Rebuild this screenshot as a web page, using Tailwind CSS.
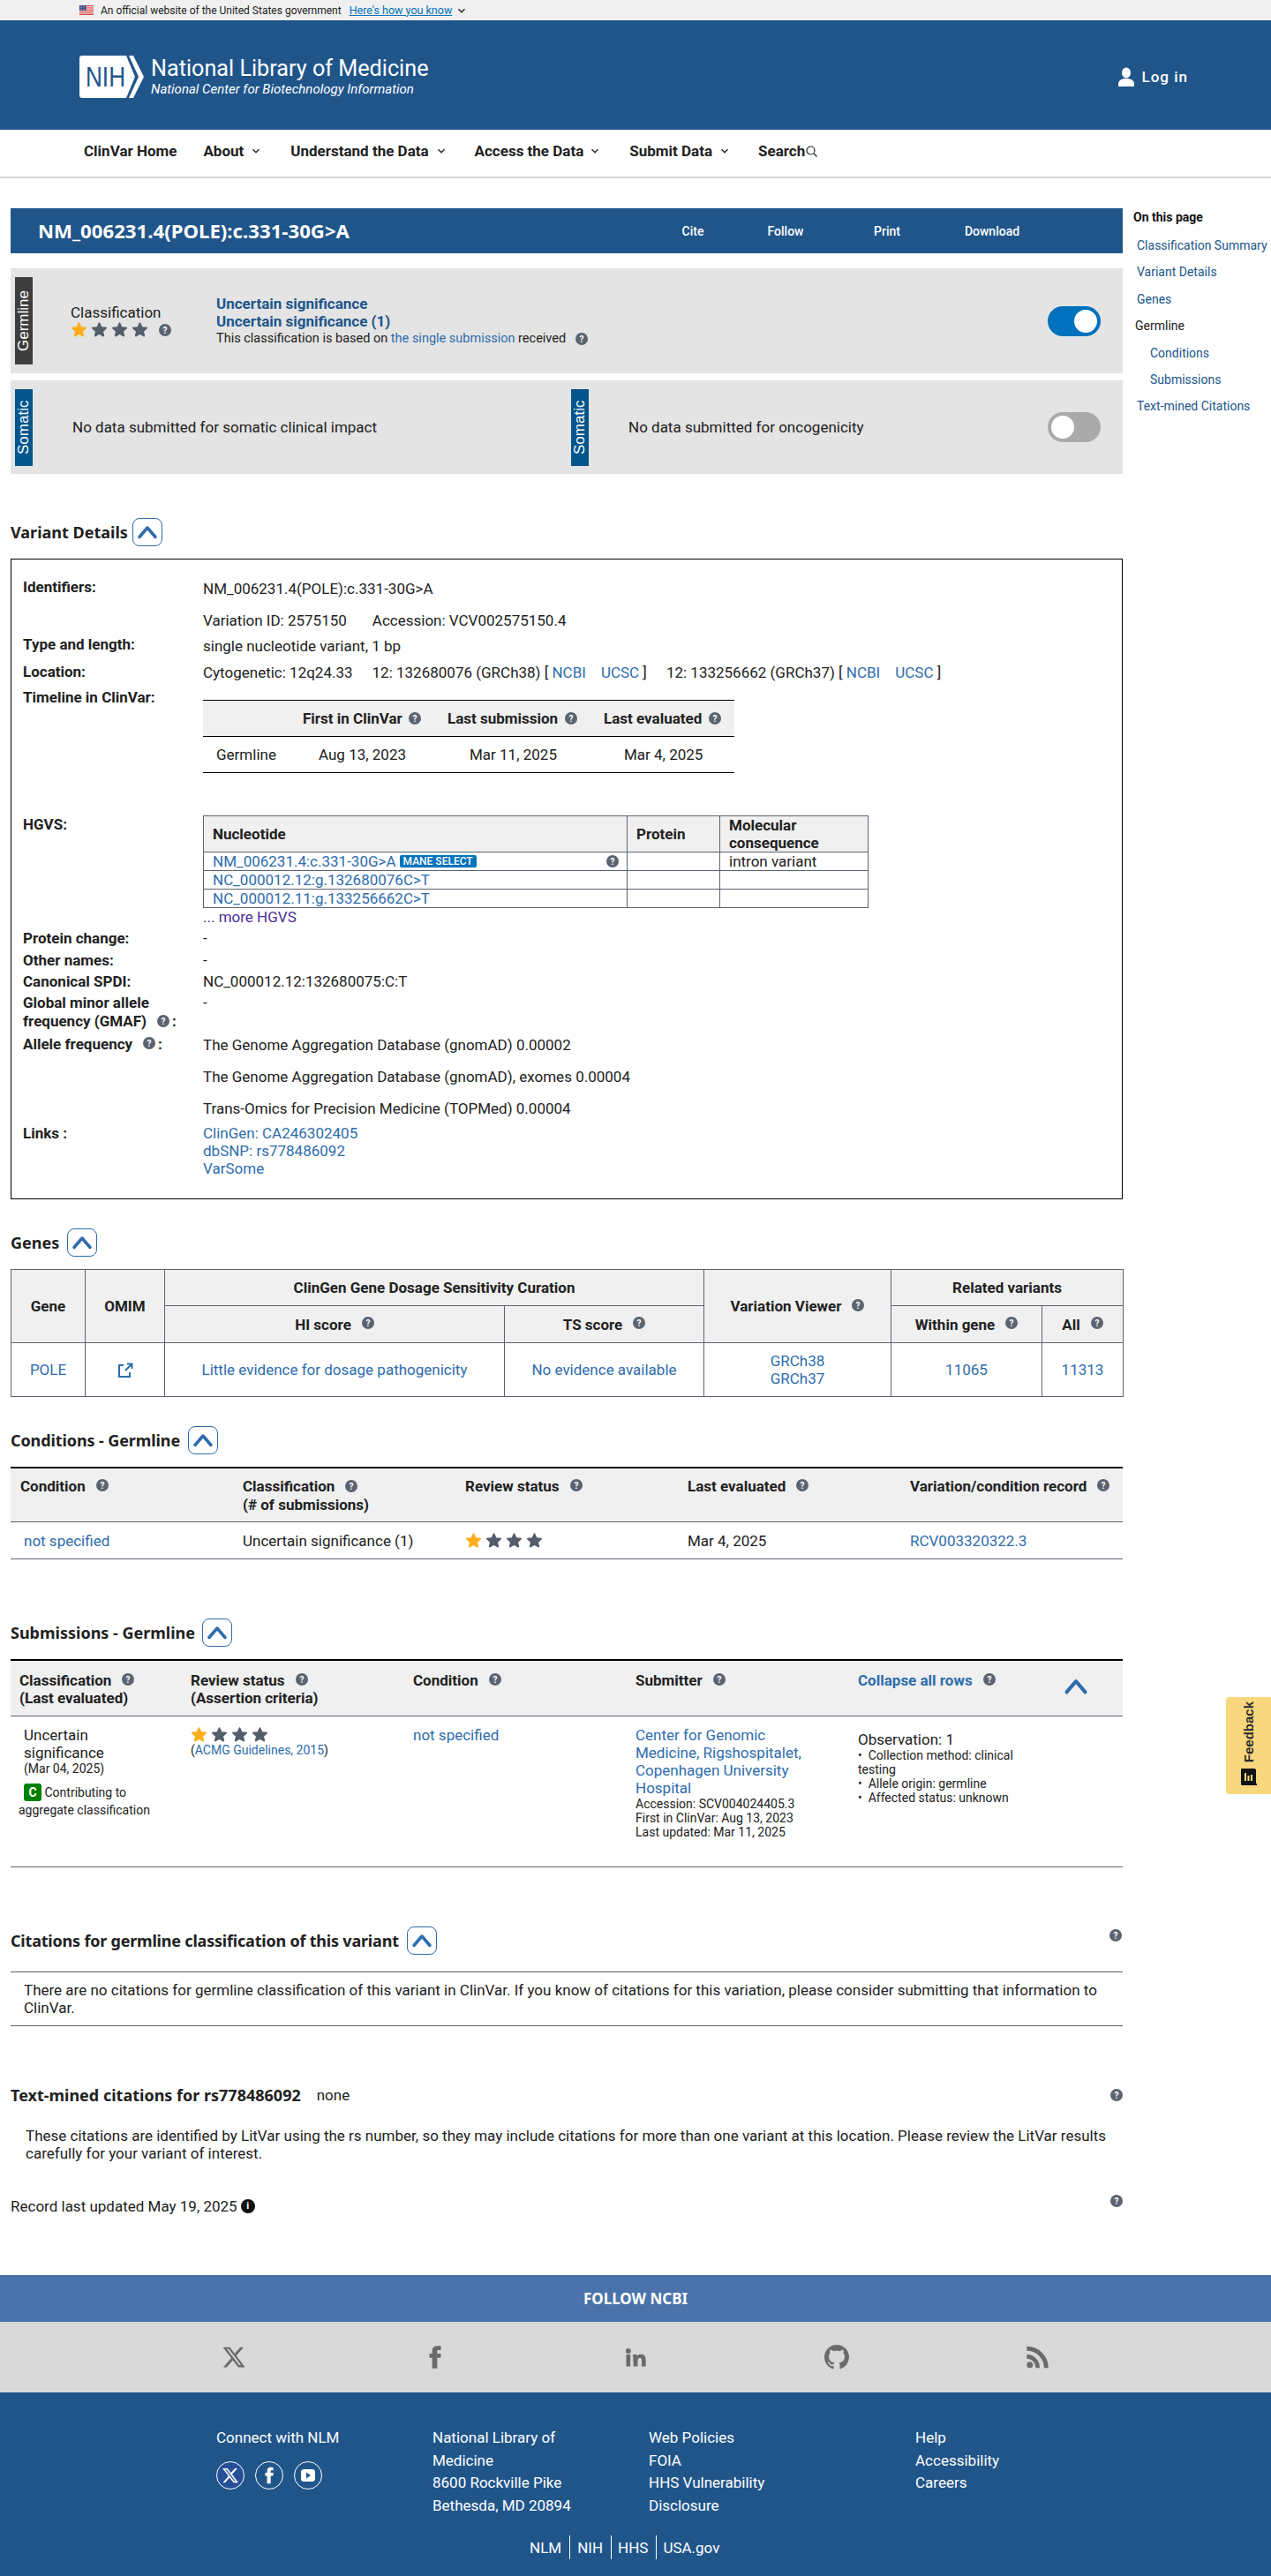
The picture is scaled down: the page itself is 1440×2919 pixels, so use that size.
<!DOCTYPE html>
<html lang="en">
<head>
    <meta charset="UTF-8">
    <meta name="viewport" content="width=device-width, initial-scale=1.0">
    <title>NM_006231.4(POLE):c.331-30G>A - ClinVar</title>
    <script src="https://cdn.jsdelivr.net/npm/@tailwindcss/browser@4"></script>
</head>
<body class="relative bg-white text-[#212121] text-[17px] leading-[20px] [font-family:Roboto,sans-serif] h-[2919px] overflow-hidden">
    <svg class="hidden">
        <symbol id="help" viewBox="0 0 14 14"><circle cx="7" cy="7" r="7" fill="#5c6370"/><text x="7" y="10.5" text-anchor="middle" font-size="10" font-weight="700" font-family="Roboto" fill="#fff">?</text></symbol>
        <symbol id="star" viewBox="0 0 24 24"><path d="M12 2.500l2.900 6.300 6.900.8-5.100 4.700 1.400 6.800-6.100-3.400-6.100 3.400 1.400-6.800-5.100-4.700 6.900-.8z" stroke-width="2" stroke-linejoin="round" stroke="currentColor" fill="currentColor"/></symbol>
        <symbol id="chev" viewBox="0 0 24 24"><path d="M3 17.500 12 7l9 10.500" fill="none" stroke="#2e6cad" stroke-width="3.500" stroke-linecap="round" stroke-linejoin="round"/></symbol>
        <symbol id="down" viewBox="0 0 10 10"><path d="M1.500 3.200 5 6.800l3.500-3.600" fill="none" stroke="currentColor" stroke-width="1.300"/></symbol>
        <symbol id="xlogo" viewBox="0 0 24 24"><path fill="currentColor" d="M18.244 2.250h3.308l-7.227 8.260 8.502 11.240H16.170l-5.214-6.817L4.990 21.750H1.680l7.730-8.835L1.254 2.250H8.080l4.713 6.231zm-1.161 17.520h1.833L7.084 4.126H5.117z"/></symbol>
    </svg>

    <!-- gov banner -->
    <div class="h-[23px] bg-[#f0f0f0] flex items-center pl-[90px] text-[12px]">
        <svg class="w-[16px] h-[11px] mr-[8px]" viewBox="0 0 16 11">
            <rect width="16" height="11" fill="#fff"/>
            <path d="M0 .5h16M0 2.200h16M0 3.900h16M0 5.600h16M0 7.300h16M0 9h16M0 10.500h16" stroke="#d9352c" stroke-width=".9"/>
            <rect width="7.500" height="5.800" fill="#2f3f7f"/>
            <path d="M1 1h5.500M1 2.800h5.500M1 4.600h5.500" stroke="#fff" stroke-width=".7" stroke-dasharray=".7 .7"/>
        </svg>
        <span>An official website of the United States government</span>
        <a class="ml-[9px] text-[12.500px] text-[#0071bc] underline">Here's how you know</a>
        <svg class="w-[10px] h-[10px] ml-[6px]"><use href="#down"/></svg>
    </div>

    <!-- NLM header -->
    <header class="h-[124px] bg-[#20558a] flex items-center pl-[90px] pr-[94px] text-white">
        <svg class="w-[73px] h-[48px] mt-[4px]" viewBox="0 0 73 48">
            <path d="M3 0h50l10 24-10 24H3q-3 0-3-3V3q0-3 3-3z" fill="#fff"/>
            <path d="M56 0h5l12 24-12 24h-5l11-24z" fill="#fff"/>
            <text x="7" y="35" font-family="Liberation Sans" font-size="31" fill="#20558a" textLength="45" lengthAdjust="spacingAndGlyphs">NIH</text>
        </svg>
        <div class="ml-[8px] mt-[4px]">
            <div class="text-[25.200px] leading-[28px]">National Library of Medicine</div>
            <div class="text-[15px] leading-[18px] italic">National Center for Biotechnology Information</div>
        </div>
        <div class="ml-auto flex items-center mt-[4px] font-medium tracking-[1px]">
            <svg class="w-[18px] h-[22px] mr-[9px]" viewBox="0 0 18 22" fill="#fff"><ellipse cx="9" cy="6.500" rx="5" ry="6"/><path d="M0 22v-3c0-4 4-6 9-6s9 2 9 6v3z"/></svg>
            Log in
        </div>
    </header>

    <!-- nav -->
    <nav class="h-[55px] border-b-2 border-[#d8d8d8] flex items-center font-bold text-[#212121] pl-[95px] pb-[5px]">
        <a>ClinVar Home</a>
        <a class="ml-[30px] flex items-center">About<svg class="w-[10px] h-[10px] ml-[9px]"><use href="#down"/></svg></a>
        <a class="ml-[34px] flex items-center">Understand the Data<svg class="w-[10px] h-[10px] ml-[9px]"><use href="#down"/></svg></a>
        <a class="ml-[33px] flex items-center">Access the Data<svg class="w-[10px] h-[10px] ml-[8px]"><use href="#down"/></svg></a>
        <a class="ml-[34px] flex items-center">Submit Data<svg class="w-[10px] h-[10px] ml-[9px]"><use href="#down"/></svg></a>
        <a class="ml-[33px] flex items-center">Search<svg class="w-[13px] h-[13px] ml-[1px]" viewBox="0 0 13 13" fill="none" stroke="#212121" stroke-width="1.200"><circle cx="5.500" cy="5.500" r="4.500"/><path d="m9 9 3.500 3.500"/></svg></a>
    </nav>

    <div class="flex pl-[12px] pt-[34px]">
        <main class="w-[1260px] shrink-0">
            <!-- title bar -->
            <div class="h-[51px] bg-[#20558a] text-white flex items-center relative">
                <h1 class="ml-[31px] text-[22.200px] font-bold [font-family:'Noto_Sans',sans-serif]">NM_006231.4(POLE):c.331-30G&gt;A</h1>
                <div class="ml-auto mr-[92px] h-full flex items-center text-[14px] font-medium">
                    <a class="w-[106px] text-center">Cite</a>
                    <a class="w-[104px] text-center">Follow</a>
                    <a class="w-[126px] text-center">Print</a>
                    <a class="w-[112px] text-center">Download</a>
                </div>
            </div>

            <!-- germline summary -->
            <section class="mt-[17px] h-[119px] bg-[#e4e4e4] flex items-center pl-[5px] pr-[25px]">
                <div class="w-[20px] h-[99px] bg-[#3d3d3d] text-white flex items-center justify-center [writing-mode:vertical-rl] rotate-180 [font-family:'Liberation_Sans',sans-serif]">Germline</div>
                <div class="ml-[43px] w-[165px]">
                    <div>Classification</div>
                    <div class="flex items-center gap-[4px] text-[#545d6b]">
                        <svg class="w-[19px] h-[19px] text-[#ffae1a]"><use href="#star"/></svg>
                        <svg class="w-[19px] h-[19px]"><use href="#star"/></svg>
                        <svg class="w-[19px] h-[19px]"><use href="#star"/></svg>
                        <svg class="w-[19px] h-[19px]"><use href="#star"/></svg>
                        <svg class="w-[14px] h-[14px] ml-[8px]"><use href="#help"/></svg>
                    </div>
                </div>
                <div>
                    <div class="font-bold text-[#20558a]">Uncertain significance</div>
                    <div class="font-bold text-[#20558a]">Uncertain significance (1)</div>
                    <div class="text-[14.500px] flex items-center">This classification is based on&nbsp;<a class="text-[#2e6cad]">the single submission</a>&nbsp;received<svg class="w-[14px] h-[14px] ml-[11px]"><use href="#help"/></svg></div>
                </div>
                <div class="ml-auto w-[60px] h-[34px] rounded-full bg-[#0071bc] flex items-center justify-end pr-[4px]"><span class="w-[26px] h-[26px] rounded-full bg-white"></span></div>
            </section>

            <!-- somatic summary -->
            <section class="mt-[8px] h-[106px] bg-[#e4e4e4] flex items-center pl-[5px] pr-[25px]">
                <div class="w-[20px] h-[87px] bg-[#00558c] text-white flex items-center justify-center [writing-mode:vertical-rl] rotate-180 [font-family:'Liberation_Sans',sans-serif]">Somatic</div>
                <div class="ml-[45px] w-[565px]">No data submitted for somatic clinical impact</div>
                <div class="w-[20px] h-[87px] bg-[#00558c] text-white flex items-center justify-center [writing-mode:vertical-rl] rotate-180 [font-family:'Liberation_Sans',sans-serif]">Somatic</div>
                <div class="ml-[45px]">No data submitted for oncogenicity</div>
                <div class="ml-auto w-[60px] h-[34px] rounded-full bg-[#aaaaaa] flex items-center pl-[4px]"><span class="w-[26px] h-[26px] rounded-full bg-white"></span></div>
            </section>

            <!-- variant details -->
            <div class="mt-[50px] h-[32px] flex items-center">
                <h2 class="text-[18px] font-bold [font-family:'Noto_Sans',sans-serif]">Variant Details</h2>
                <button class="ml-[5px] w-[34px] h-[32px] border border-[#2e6cad] rounded-[8px] flex items-center justify-center"><svg class="w-[24px] h-[24px]"><use href="#chev"/></svg></button>
            </div>

            <div class="mt-[14px] border border-black pt-[21px] pb-[24px] pl-[13px]">
                <div class="flex">
                    <div class="w-[204px] font-bold shrink-0">Identifiers:</div>
                    <div class="pt-[2px]">
                        <div>NM_006231.4(POLE):c.331-30G&gt;A</div>
                        <div class="mt-[16px]">Variation ID: 2575150<span class="ml-[29px]">Accession: VCV002575150.4</span></div>
                    </div>
                </div>
                <div class="flex mt-[7px]">
                    <div class="w-[204px] font-bold shrink-0">Type and length:</div>
                    <div class="pt-[2px]">single nucleotide variant, 1 bp</div>
                </div>
                <div class="flex mt-[9px]">
                    <div class="w-[204px] font-bold shrink-0">Location:</div>
                    <div class="pt-[1px] whitespace-nowrap">Cytogenetic: 12q24.33<span class="ml-[22px]">12: 132680076 (GRCh38) [</span> <a class="text-[#2e6cad]">NCBI</a><a class="ml-[17px] text-[#2e6cad]">UCSC</a> ]<span class="ml-[22px]">12: 133256662 (GRCh37) [</span> <a class="text-[#2e6cad]">NCBI</a><a class="ml-[17px] text-[#2e6cad]">UCSC</a> ]</div>
                </div>
                <div class="flex mt-[8px]">
                    <div class="w-[204px] font-bold shrink-0">Timeline in ClinVar:</div>
                    <table class="mt-[13px] w-[602px] table-fixed border-y border-black border-collapse">
                        <colgroup><col class="w-[113px]"><col class="w-[164px]"><col class="w-[177px]"><col class="w-[148px]"></colgroup>
                        <tr class="h-[41px] bg-[#f0f0f0] border-b border-black font-bold">
                            <th></th>
                            <th class="text-left"><span class="inline-flex items-center whitespace-nowrap">First in ClinVar<svg class="w-[14px] h-[14px] ml-[7px]"><use href="#help"/></svg></span></th>
                            <th class="text-left"><span class="inline-flex items-center whitespace-nowrap">Last submission<svg class="w-[14px] h-[14px] ml-[8px]"><use href="#help"/></svg></span></th>
                            <th class="text-left"><span class="inline-flex items-center whitespace-nowrap">Last evaluated<svg class="w-[14px] h-[14px] ml-[8px]"><use href="#help"/></svg></span></th>
                        </tr>
                        <tr class="h-[41px]">
                            <td class="pl-[15px]">Germline</td>
                            <td class="pl-[18px]">Aug 13, 2023</td>
                            <td class="pl-[25px]">Mar 11, 2025</td>
                            <td class="pl-[23px]">Mar 4, 2025</td>
                        </tr>
                    </table>
                </div>
                <div class="flex mt-[48px]">
                    <div class="w-[204px] font-bold shrink-0">HGVS:</div>
                    <div>
                        <table class="w-[753px] table-fixed border-collapse border border-[#5c6370]">
                            <colgroup><col class="w-[480px]"><col class="w-[105px]"><col class="w-[168px]"></colgroup>
                            <tr class="h-[41px] bg-[#f0f0f0] border-b border-[#5c6370] font-bold text-left">
                                <th class="pl-[10px] border-r border-[#5c6370]">Nucleotide</th>
                                <th class="pl-[10px] border-r border-[#5c6370]">Protein</th>
                                <th class="pl-[10px]">Molecular consequence</th>
                            </tr>
                            <tr class="h-[21px] border-b border-[#5c6370]">
                                <td class="pl-[10px] pr-[9px] border-r border-[#5c6370]"><div class="flex items-center"><a class="text-[#2e6cad]">NM_006231.4:c.331-30G&gt;A</a><span class="ml-[4px] h-[14px] px-[4px] rounded-[2px] bg-[#0071bc] text-white text-[12px] leading-[14px] font-medium">MANE SELECT</span><svg class="ml-auto w-[14px] h-[14px]"><use href="#help"/></svg></div></td>
                                <td class="border-r border-[#5c6370]"></td>
                                <td class="pl-[10px]">intron variant</td>
                            </tr>
                            <tr class="h-[21px] border-b border-[#5c6370]">
                                <td class="pl-[10px] border-r border-[#5c6370]"><a class="text-[#2e6cad]">NC_000012.12:g.132680076C&gt;T</a></td>
                                <td class="border-r border-[#5c6370]"></td>
                                <td></td>
                            </tr>
                            <tr class="h-[21px]">
                                <td class="pl-[10px] border-r border-[#5c6370]"><a class="text-[#2e6cad]">NC_000012.11:g.133256662C&gt;T</a></td>
                                <td class="border-r border-[#5c6370]"></td>
                                <td></td>
                            </tr>
                        </table>
                        <a class="block text-[#4b2e9a]">... more HGVS</a>
                    </div>
                </div>
                <div class="flex mt-[4px]">
                    <div class="w-[204px] font-bold shrink-0">Protein change:</div>
                    <div>-</div>
                </div>
                <div class="flex mt-[5px]">
                    <div class="w-[204px] font-bold shrink-0">Other names:</div>
                    <div>-</div>
                </div>
                <div class="flex mt-[4px]">
                    <div class="w-[204px] font-bold shrink-0">Canonical SPDI:</div>
                    <div>NC_000012.12:132680075:C:T</div>
                </div>
                <div class="flex mt-[4px]">
                    <div class="w-[204px] font-bold shrink-0 leading-[21px]">Global minor allele<br><span class="inline-flex items-center">frequency (GMAF)<svg class="w-[14px] h-[14px] ml-[12px] -mt-[2px] mr-[3px]"><use href="#help"/></svg>:</span></div>
                    <div>-</div>
                </div>
                <div class="flex mt-[5px]">
                    <div class="w-[204px] font-bold shrink-0"><span class="inline-flex items-center">Allele frequency<svg class="w-[14px] h-[14px] ml-[12px] -mt-[2px] mr-[3px]"><use href="#help"/></svg>:</span></div>
                    <div class="pt-[1px]">
                        <div>The Genome Aggregation Database (gnomAD) 0.00002</div>
                        <div class="mt-[16px]">The Genome Aggregation Database (gnomAD), exomes 0.00004</div>
                        <div class="mt-[16px]">Trans-Omics for Precision Medicine (TOPMed) 0.00004</div>
                    </div>
                </div>
                <div class="flex mt-[8px]">
                    <div class="w-[204px] font-bold shrink-0">Links :</div>
                    <div class="text-[#2e6cad]">
                        <a class="block">ClinGen: CA246302405</a>
                        <a class="block">dbSNP: rs778486092</a>
                        <a class="block">VarSome</a>
                    </div>
                </div>
            </div>

            <!-- genes -->
            <div class="mt-[33px] h-[32px] flex items-center">
                <h2 class="text-[18px] font-bold [font-family:'Noto_Sans',sans-serif]">Genes</h2>
                <button class="ml-[9px] w-[34px] h-[32px] border border-[#2e6cad] rounded-[8px] flex items-center justify-center"><svg class="w-[24px] h-[24px]"><use href="#chev"/></svg></button>
            </div>
            <table class="mt-[14px] w-full table-fixed border-collapse border border-[#5c6370] text-center">
                <colgroup><col class="w-[84px]"><col class="w-[90px]"><col class="w-[385px]"><col class="w-[226px]"><col class="w-[212px]"><col class="w-[171px]"><col class="w-[92px]"></colgroup>
                <tr class="h-[41px] bg-[#f0f0f0] font-bold">
                    <th rowspan="2" class="border border-[#5c6370]">Gene</th>
                    <th rowspan="2" class="border border-[#5c6370]">OMIM</th>
                    <th colspan="2" class="border border-[#5c6370]">ClinGen Gene Dosage Sensitivity Curation</th>
                    <th rowspan="2" class="border border-[#5c6370]">Variation Viewer<svg class="inline w-[14px] h-[14px] ml-[12px] -mt-[6px]"><use href="#help"/></svg></th>
                    <th colspan="2" class="border border-[#5c6370]">Related variants</th>
                </tr>
                <tr class="h-[42px] bg-[#f0f0f0] font-bold">
                    <th class="border border-[#5c6370]">HI score<svg class="inline w-[14px] h-[14px] ml-[12px] -mt-[6px]"><use href="#help"/></svg></th>
                    <th class="border border-[#5c6370]">TS score<svg class="inline w-[14px] h-[14px] ml-[12px] -mt-[6px]"><use href="#help"/></svg></th>
                    <th class="border border-[#5c6370]">Within gene<svg class="inline w-[14px] h-[14px] ml-[12px] -mt-[6px]"><use href="#help"/></svg></th>
                    <th class="border border-[#5c6370]">All<svg class="inline w-[14px] h-[14px] ml-[12px] -mt-[6px]"><use href="#help"/></svg></th>
                </tr>
                <tr class="h-[61px] text-[#2e6cad]">
                    <td class="border border-[#5c6370]">POLE</td>
                    <td class="border border-[#5c6370]"><svg class="inline w-[18px] h-[18px]" viewBox="0 0 18 18" fill="none" stroke="#2e6cad" stroke-width="2"><path d="M7 3H2v13h12v-5M9 9l7-7M11 1.500h5.500V7"/></svg></td>
                    <td class="border border-[#5c6370]">Little evidence for dosage pathogenicity</td>
                    <td class="border border-[#5c6370]">No evidence available</td>
                    <td class="border border-[#5c6370]">GRCh38<br>GRCh37</td>
                    <td class="border border-[#5c6370]">11065</td>
                    <td class="border border-[#5c6370]">11313</td>
                </tr>
            </table>

            <!-- conditions -->
            <div class="mt-[33px] h-[32px] flex items-center">
                <h2 class="text-[18px] font-bold tracking-[-0.100px] [font-family:'Noto_Sans',sans-serif]">Conditions - Germline</h2>
                <button class="ml-[9px] w-[34px] h-[32px] border border-[#2e6cad] rounded-[8px] flex items-center justify-center"><svg class="w-[24px] h-[24px]"><use href="#chev"/></svg></button>
            </div>
            <div class="mt-[14px] border-t-2 border-black bg-[#f0f0f0] h-[63px] border-b border-b-[#5c6370] grid grid-cols-[252px_252px_252px_252px_1fr] pt-[10px] pl-[11px] font-bold">
                <div><span class="inline-flex items-center">Condition<svg class="w-[14px] h-[14px] ml-[12px] -mt-[2px]"><use href="#help"/></svg></span></div>
                <div class="leading-[21px]"><span class="inline-flex items-center">Classification<svg class="w-[14px] h-[14px] ml-[12px] -mt-[2px]"><use href="#help"/></svg></span><br>(# of submissions)</div>
                <div><span class="inline-flex items-center">Review status<svg class="w-[14px] h-[14px] ml-[12px] -mt-[2px]"><use href="#help"/></svg></span></div>
                <div><span class="inline-flex items-center">Last evaluated<svg class="w-[14px] h-[14px] ml-[12px] -mt-[2px]"><use href="#help"/></svg></span></div>
                <div class="whitespace-nowrap"><span class="inline-flex items-center">Variation/condition record<svg class="w-[14px] h-[14px] ml-[12px] -mt-[2px]"><use href="#help"/></svg></span></div>
            </div>
            <div class="h-[42px] border-b border-[#5c6370] grid grid-cols-[252px_252px_252px_252px_1fr] items-center pl-[11px]">
                <a class="pl-[4px] text-[#2e6cad]">not specified</a>
                <div>Uncertain significance (1)</div>
                <div class="flex gap-[4px] text-[#545d6b]">
                    <svg class="w-[19px] h-[19px] text-[#ffae1a]"><use href="#star"/></svg>
                    <svg class="w-[19px] h-[19px]"><use href="#star"/></svg>
                    <svg class="w-[19px] h-[19px]"><use href="#star"/></svg>
                    <svg class="w-[19px] h-[19px]"><use href="#star"/></svg>
                </div>
                <div>Mar 4, 2025</div>
                <a class="text-[#2e6cad]">RCV003320322.3</a>
            </div>

            <!-- submissions -->
            <div class="mt-[67px] h-[32px] flex items-center">
                <h2 class="text-[18px] font-bold [font-family:'Noto_Sans',sans-serif]">Submissions - Germline</h2>
                <button class="ml-[8px] w-[34px] h-[32px] border border-[#2e6cad] rounded-[8px] flex items-center justify-center"><svg class="w-[24px] h-[24px]"><use href="#chev"/></svg></button>
            </div>
            <div class="mt-[14px] border-t-2 border-black bg-[#f0f0f0] h-[65px] border-b border-b-[#5c6370] grid grid-cols-[194px_252px_252px_252px_310px] pt-[12px] font-bold">
                <div class="pl-[10px]"><span class="inline-flex items-center">Classification<svg class="w-[14px] h-[14px] ml-[12px] -mt-[2px]"><use href="#help"/></svg></span><br>(Last evaluated)</div>
                <div class="pl-[10px]"><span class="inline-flex items-center">Review status<svg class="w-[14px] h-[14px] ml-[12px] -mt-[2px]"><use href="#help"/></svg></span><br>(Assertion criteria)</div>
                <div class="pl-[10px]"><span class="inline-flex items-center">Condition<svg class="w-[14px] h-[14px] ml-[12px] -mt-[2px]"><use href="#help"/></svg></span></div>
                <div class="pl-[10px]"><span class="inline-flex items-center">Submitter<svg class="w-[14px] h-[14px] ml-[12px] -mt-[2px]"><use href="#help"/></svg></span></div>
                <div class="pl-[10px] flex items-start"><span class="inline-flex items-center text-[#2e6cad]">Collapse all rows<svg class="w-[14px] h-[14px] ml-[12px] -mt-[2px]"><use href="#help"/></svg></span><svg class="absolute left-[1205px] top-[1897px] w-[28px] h-[28px]"><use href="#chev"/></svg></div>
            </div>
            <div class="h-[171px] border-b border-[#5c6370] grid grid-cols-[194px_252px_252px_252px_310px] pt-[11px]">
                <div class="pl-[15px]">
                    <div class="w-[130px]">Uncertain significance</div>
                    <div class="text-[14px] leading-[16px]">(Mar 04, 2025)</div>
                    <div class="-ml-[6px] mt-[9px] text-[14px] leading-[20px]"><span class="ml-[6px] inline-block w-[20px] h-[20px] rounded-[3px] bg-[#008000] text-white font-bold text-center">C</span> Contributing to<br>aggregate classification</div>
                </div>
                <div class="pl-[10px]">
                    <div class="flex gap-[4px] text-[#545d6b]">
                        <svg class="w-[19px] h-[19px] text-[#ffae1a]"><use href="#star"/></svg>
                        <svg class="w-[19px] h-[19px]"><use href="#star"/></svg>
                        <svg class="w-[19px] h-[19px]"><use href="#star"/></svg>
                        <svg class="w-[19px] h-[19px]"><use href="#star"/></svg>
                    </div>
                    <div class="text-[14px] leading-[16px]">(<a class="text-[#2e6cad]">ACMG Guidelines, 2015</a>)</div>
                </div>
                <div class="pl-[10px]"><a class="text-[#2e6cad]">not specified</a></div>
                <div class="pl-[10px]">
                    <a class="block w-[200px] text-[#2e6cad]">Center for Genomic Medicine, Rigshospitalet, Copenhagen University Hospital</a>
                    <div class="text-[14px] leading-[16px]">Accession: SCV004024405.3<br>First in ClinVar: Aug 13, 2023<br>Last updated: Mar 11, 2025</div>
                </div>
                <div class="pl-[10px] pt-[5px]">
                    <div>Observation: 1</div>
                    <ul class="text-[14px] leading-[16px] w-[190px]">
                        <li>•&nbsp; Collection method: clinical testing</li>
                        <li>•&nbsp; Allele origin: germline</li>
                        <li>•&nbsp; Affected status: unknown</li>
                    </ul>
                </div>
            </div>

            <!-- citations -->
            <div class="mt-[67px] h-[32px] flex items-center relative">
                <h2 class="text-[18px] font-bold tracking-[-0.200px] [font-family:'Noto_Sans',sans-serif]">Citations for germline classification of this variant</h2>
                <button class="ml-[9px] w-[34px] h-[32px] border border-[#2e6cad] rounded-[8px] flex items-center justify-center"><svg class="w-[24px] h-[24px]"><use href="#chev"/></svg></button>
                <svg class="ml-auto mr-[1px] -mt-[12px] w-[14px] h-[14px]"><use href="#help"/></svg>
            </div>
            <div class="mt-[19px] border-y border-[#5c6370] h-[62px] py-[10px] pl-[15px] pr-[20px]">There are no citations for germline classification of this variant in ClinVar. If you know of citations for this variation, please consider submitting that information to ClinVar.</div>

            <div class="mt-[62px] h-[32px] flex items-center">
                <h2 class="text-[18px] font-bold [font-family:'Noto_Sans',sans-serif]">Text-mined citations for rs778486092</h2>
                <span class="ml-[18px]">none</span>
                <svg class="ml-auto w-[14px] h-[14px]"><use href="#help"/></svg>
            </div>
            <p class="mt-[20px] pl-[17px] pr-[12px]">These citations are identified by LitVar using the rs number, so they may include citations for more than one variant at this location. Please review the LitVar results carefully for your variant of interest.</p>
            <div class="mt-[40px] flex items-center">
                <span>Record last updated May 19, 2025</span>
                <span class="ml-[4px] w-[16px] h-[16px] rounded-full bg-[#111] text-white text-[11px] font-bold flex items-center justify-center">i</span>
                <svg class="ml-auto -mt-[12px] w-[14px] h-[14px]"><use href="#help"/></svg>
            </div>
        </main>

        <aside class="ml-[12px] text-[14px] leading-[20px]">
            <div class="font-bold text-[#111]">On this page</div>
            <ul class="mt-[12px] text-[#20558a]">
                <li class="h-[30.400px] pl-[4px]">Classification Summary</li>
                <li class="h-[30.400px] pl-[4px]">Variant Details</li>
                <li class="h-[30.400px] pl-[4px]">Genes</li>
                <li class="h-[30.400px] pl-[2px] text-[#212121]">Germline</li>
                <li class="h-[30.400px] pl-[19px]">Conditions</li>
                <li class="h-[30.400px] pl-[19px]">Submissions</li>
                <li class="h-[30.400px] pl-[4px]">Text-mined Citations</li>
            </ul>
        </aside>
    </div>

    <!-- feedback tab -->
    <div class="absolute right-0 top-[1923px] w-[51px] h-[110px] bg-[#f9d77e] rounded-l-[4px] flex flex-col items-center justify-end pb-[9px]">
        <span class="[writing-mode:vertical-rl] rotate-180 font-bold text-[15px] text-[#2b2b2b] [font-family:'Liberation_Sans',sans-serif]">Feedback</span>
        <svg class="mt-[7px] w-[18px] h-[20px]" viewBox="0 0 18 20"><path d="M1 0h14q2 0 2 2v15h1v2H1q-1 0-1-1V1q0-1 1-1z" fill="#111"/><path d="M4 5h2v9H4zM7.500 8h2v6h-2zM11 7h2v7h-2z" fill="#f9d77e"/></svg>
    </div>

    <!-- footer -->
    <footer class="absolute inset-x-0 top-[2578px]">
        <div class="h-[53px] bg-[#4a73ab] text-white font-bold flex items-center justify-center [font-family:'Noto_Sans',sans-serif]">FOLLOW NCBI</div>
        <div class="h-[80px] bg-[#d9d9d9] text-[#6b6b6b] flex items-center justify-between pl-[251px] pr-[251px]">
            <svg class="w-[28px] h-[28px]"><use href="#xlogo"/></svg>
            <svg class="w-[28px] h-[28px]" viewBox="0 0 24 24" fill="currentColor"><path d="M14 8.500V6.300c0-.9.6-1.100 1-1.100h2.600V1.100L14 1c-4 0-4.900 3-4.900 4.900v2.600H6.500v4.200h2.600V23h4.900V12.700h3.300l.4-4.200z"/></svg>
            <svg class="w-[28px] h-[28px]" viewBox="0 0 24 24" fill="currentColor"><path d="M4.980 3.500a2.500 2.500 0 1 1 0 5 2.500 2.500 0 0 1 0-5zM3 9.500h4V21H3zM9.500 9.500h3.800v1.600c.5-1 1.900-1.900 3.800-1.900 4 0 4.900 2.500 4.900 5.900V21h-4v-5.200c0-1.300-.1-2.900-1.800-2.900s-2.100 1.400-2.100 2.800V21h-4z"/></svg>
            <svg class="w-[28px] h-[28px]" viewBox="0 0 16 16" fill="currentColor"><path d="M8 0C3.580 0 0 3.580 0 8c0 3.540 2.290 6.530 5.470 7.590.4.070.55-.17.55-.38 0-.19-.01-.82-.01-1.490-2.010.37-2.530-.49-2.690-.94-.09-.23-.48-.94-.82-1.130-.28-.15-.68-.52-.01-.53.63-.01 1.080.58 1.230.82.72 1.210 1.870.87 2.330.66.070-.52.28-.87.51-1.070-1.780-.2-3.640-.89-3.640-3.950 0-.87.31-1.590.82-2.150-.08-.2-.36-1.020.08-2.120 0 0 .67-.21 2.200.82.64-.18 1.320-.27 2-.27s1.360.09 2 .27c1.530-1.040 2.200-.82 2.200-.82.44 1.100.16 1.920.08 2.120.51.56.82 1.270.82 2.150 0 3.070-1.870 3.750-3.650 3.950.29.25.54.73.54 1.480 0 1.070-.01 1.930-.01 2.200 0 .21.15.46.55.38A8.010 8.010 0 0 0 16 8c0-4.420-3.580-8-8-8z"/></svg>
            <svg class="w-[28px] h-[28px]" viewBox="0 0 24 24" fill="currentColor"><circle cx="5" cy="19.500" r="3"/><path d="M2 9.500v4a8.500 8.500 0 0 1 8.500 9h4A12.500 12.500 0 0 0 2 9.500z"/><path d="M2 1.500v4.200a16.800 16.800 0 0 1 16.800 16.800H23A21 21 0 0 0 2 1.500z"/></svg>
        </div>
        <div class="h-[208px] bg-[#20558a] text-white relative">
            <div class="flex pt-[39px] pl-[245px] leading-[25.500px]">
                <div class="w-[245px]">
                    <div>Connect with NLM</div>
                    <div class="mt-[13px] flex gap-[12px]">
                        <span class="w-[32px] h-[32px] rounded-full border border-white bg-[#264f97] flex items-center justify-center"><svg class="w-[20px] h-[20px]"><use href="#xlogo"/></svg></span>
                        <span class="w-[32px] h-[32px] rounded-full border border-white flex items-center justify-center"><svg class="w-[20px] h-[20px]" viewBox="0 0 24 24" fill="currentColor"><path d="M14 8.500V6.300c0-.9.6-1.100 1-1.100h2.600V1.100L14 1c-4 0-4.900 3-4.900 4.900v2.600H6.500v4.200h2.600V23h4.900V12.700h3.300l.4-4.200z"/></svg></span>
                        <span class="w-[32px] h-[32px] rounded-full border border-white flex items-center justify-center"><svg class="w-[16px] h-[14px]" viewBox="0 0 16 14"><rect width="16" height="14" rx="3.500" fill="#fff"/><path d="m6 3.500 5 3.500-5 3.500z" fill="#20558a"/></svg></span>
                    </div>
                </div>
                <div class="w-[245px]"><div class="w-[170px]">National Library of Medicine<br>8600 Rockville Pike<br>Bethesda, MD 20894</div></div>
                <div class="w-[302px]"><div class="w-[170px]">Web Policies<br>FOIA<br>HHS Vulnerability Disclosure</div></div>
                <div>Help<br>Accessibility<br>Careers</div>
            </div>
            <div class="absolute top-[162px] left-[600px] h-[27px] flex items-center">
                <a class="pr-[9px]">NLM</a>
                <a class="h-full flex items-center pl-[8px] pr-[9px] border-l border-white">NIH</a>
                <a class="h-full flex items-center pl-[7px] pr-[9px] border-l border-white">HHS</a>
                <a class="h-full flex items-center pl-[7px] border-l border-white">USA.gov</a>
            </div>
        </div>
    </footer>
</body>
</html>
